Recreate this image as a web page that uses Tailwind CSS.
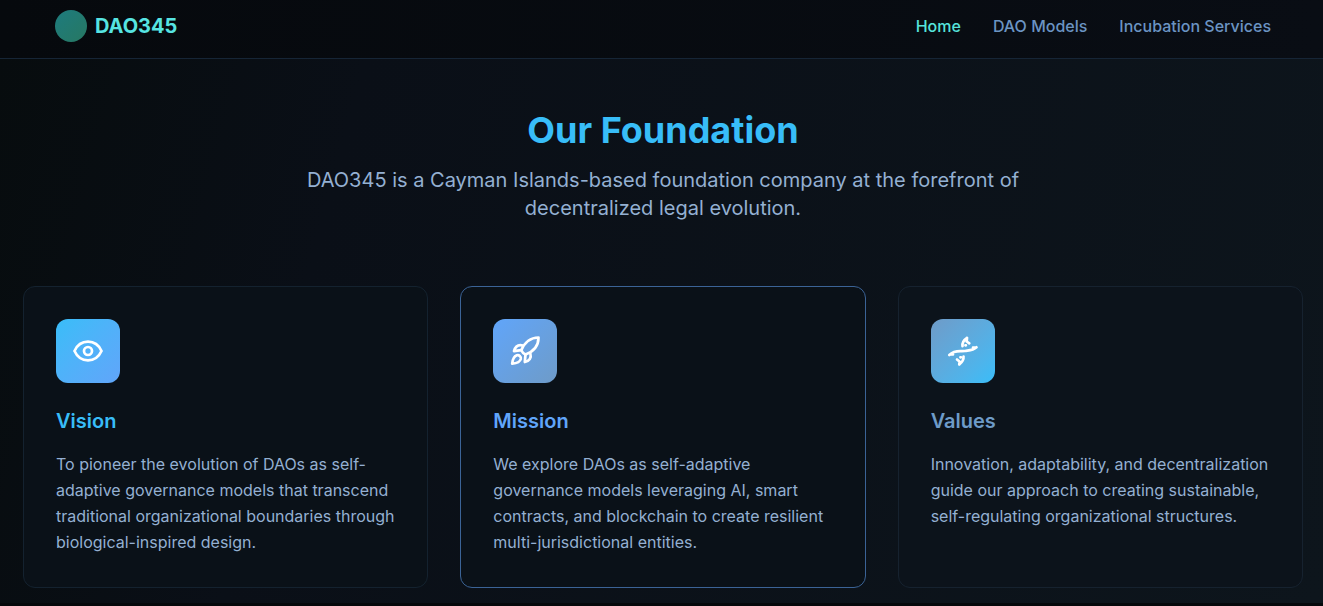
<!DOCTYPE html>
<html lang="en">
<head>
<meta charset="utf-8">
<meta name="viewport" content="width=device-width, initial-scale=1">
<title>DAO345</title>
<script src="https://cdn.jsdelivr.net/npm/@tailwindcss/browser@4"></script>
</head>
<body class="min-h-screen bg-[#05080b] font-['Inter',sans-serif] text-[#94b0d2]">
<header class="border-b border-[#162536] bg-linear-to-r from-[#06090d] to-[#090d14] pl-[3px]">
  <div class="mx-auto flex max-w-7xl items-center justify-between px-8 pt-2.5 pb-4">
    <a href="#" class="flex items-center gap-2 text-xl font-bold text-[#56e4e2]">
      <span class="size-8 rounded-full bg-linear-to-br from-[#1d7b7e] to-[#277862]"></span>
      DAO345
    </a>
    <nav class="flex gap-8 font-medium text-[#6b94c3]">
      <a href="#" class="text-[#56e4dc]">Home</a>
      <a href="#">DAO Models</a>
      <a href="#">Incubation Services</a>
    </nav>
  </div>
</header>
<main class="bg-linear-105 from-[#070c0e] via-[#0a0f17] via-25% to-[#0d151c] pt-[51px] pb-[15px] pl-[3px]">
  <div class="mx-auto max-w-7xl">
    <div class="mx-auto mb-16 max-w-3xl text-center">
      <h1 class="mb-4 text-4xl font-bold text-[#38bdf8]">Our Foundation</h1>
      <p class="text-xl/7">DAO345 is a Cayman Islands-based foundation company at the forefront of decentralized legal evolution.</p>
    </div>
    <div class="grid grid-cols-3 gap-8">
      <article class="rounded-xl border border-[#14222f] bg-[#0a1118] p-8">
        <div class="mb-6 flex size-16 items-center justify-center rounded-xl bg-linear-to-br from-[#38bdf8] to-[#60a5fa] text-white">
          <svg class="size-8" viewBox="0 0 32 32" fill="none" stroke="currentColor" stroke-width="2.7" aria-hidden="true"><path d="M2.500 16C5 10.500 10 6.700 16 6.700S27 10.500 29.500 16C27 21.500 22 25.300 16 25.300S5 21.500 2.500 16Z"/><circle cx="16" cy="16" r="4"/></svg>
        </div>
        <h2 class="mb-4 text-xl font-semibold text-[#38bdf8]">Vision</h2>
        <p class="leading-[26px]">To pioneer the evolution of DAOs as self-adaptive governance models that transcend traditional organizational boundaries through biological-inspired design.</p>
      </article>
      <article class="rounded-xl border border-[#3b6396] bg-[#0a1118] p-8">
        <div class="mb-6 flex size-16 items-center justify-center rounded-xl bg-linear-to-br from-[#60a5fa] to-[#6e9bc8] text-white">
          <svg class="size-8" viewBox="0 0 32 32" fill="none" stroke="currentColor" stroke-width="2.7" stroke-linejoin="round" aria-hidden="true"><path d="M29.500 2.500C20.500 2.700 15.500 7.700 12.300 15.200Q13.600 18.200 16.500 19.500C24.500 16.500 29.500 11.500 29.500 2.500Z"/><path d="M14 10.600C9 9.300 6.300 11.500 5 16.200L12.300 15.200M21.300 18C22.700 23 20.500 25.700 15.800 27L16.500 19.500"/><path d="M3.200 28.700C3.500 25 5 21.500 7.800 20.300C10 19.600 12.300 21.400 11.800 24C11 27 7.500 28.300 3.200 28.700Z"/></svg>
        </div>
        <h2 class="mb-4 text-xl font-semibold text-[#60a5fa]">Mission</h2>
        <p class="leading-[26px]">We explore DAOs as self-adaptive governance models leveraging AI, smart contracts, and blockchain to create resilient multi-jurisdictional entities.</p>
      </article>
      <article class="rounded-xl border border-[#16222f] bg-[#0c131b] p-8">
        <div class="mb-6 flex size-16 items-center justify-center rounded-xl bg-linear-to-br from-[#6e9bc8] to-[#38bdf8] text-white">
          <svg class="size-8" viewBox="0 0 32 32" fill="none" stroke="currentColor" stroke-width="2.700" stroke-linecap="round" stroke-linejoin="round" aria-hidden="true"><path d="M2.300 20C8 14.500 13 16.700 18 16S26 15.500 29.500 12.300M20 2.800C16 5.500 15.200 8.500 15.500 11.200M20 2.800L19.700 6.500L22.300 8.300M12.300 29.500C15.500 27 16.800 24.500 16.500 21.500M12.300 29.500L12.500 26.500L10 24.500"/><path d="M18.400 10.300h.5M13.400 22.300h.5M4.500 19.500h1.500M26 12.700h1.500"/></svg>
        </div>
        <h2 class="mb-4 text-xl font-semibold text-[#6e9bc8]">Values</h2>
        <p class="leading-[26px]">Innovation, adaptability, and decentralization guide our approach to creating sustainable, self-regulating organizational structures.</p>
      </article>
    </div>
  </div>
</main>
</body>
</html>
